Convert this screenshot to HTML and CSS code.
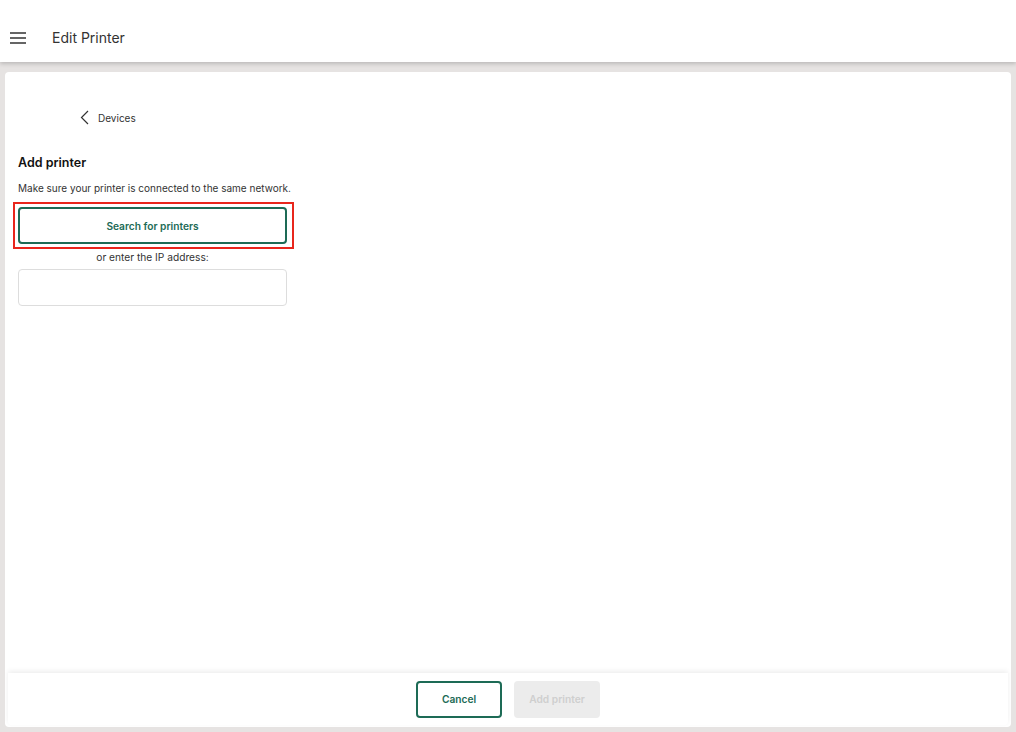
FILE: index.html
```html
<!DOCTYPE html>
<html lang="en">
<head>
  <meta charset="UTF-8">
  <meta name="viewport" content="width=device-width, initial-scale=1.0">
  <title>Edit Printer</title>
  <link rel="stylesheet" href="styles.css">
</head>
<body>

  <header class="topbar">
    <button class="menu-btn" aria-label="Menu">
      <svg width="16" height="12" viewBox="0 0 16 12">
        <path d="M0 1h16M0 6h16M0 11h16" stroke="#333" stroke-width="1.4" fill="none"/>
      </svg>
    </button>
    <h1 class="title">Edit Printer</h1>
  </header>

  <main class="card">
    <div class="content">
      <a class="back" href="#">
        <svg width="9" height="15" viewBox="0 0 9 15">
          <path d="M8 1L1.5 7.5L8 14" stroke="#333" stroke-width="1.2" fill="none"/>
        </svg>
        <span>Devices</span>
      </a>

      <section class="add-printer">
        <h2>Add printer</h2>
        <p class="hint">Make sure your printer is connected to the same network.</p>
        <div class="highlight">
          <button class="btn btn-outline btn-wide">Search for printers</button>
        </div>
        <p class="or">or enter the IP address:</p>
        <input class="ip-input" type="text">
      </section>
    </div>

    <footer class="actions">
      <button class="btn btn-outline">Cancel</button>
      <button class="btn btn-disabled" disabled>Add printer</button>
    </footer>
  </main>

</body>
</html>
```

FILE: styles.css
```css
* {
  box-sizing: border-box;
}
html, body {
  height: 100%;
}
body {
  margin: 0;
  font-family: Inter, "Noto Sans", Arial, sans-serif;
  background: #e6e3e2;
  color: #222;
  display: flex;
  flex-direction: column;
}
.topbar {
  height: 62px;
  background: #fff;
  display: flex;
  align-items: center;
  padding: 12px 10px 0 10px;
  box-shadow: 0 2px 4px rgba(0, 0, 0, 0.18);
  position: relative;
  z-index: 1;
  flex-shrink: 0;
}
.menu-btn {
  border: none;
  background: none;
  padding: 0;
  width: 16px;
  height: 12px;
  display: flex;
  margin-right: 26px;
  margin-top: 2px;
}
.title {
  margin: 0;
  font-size: 14px;
  font-weight: 400;
  color: #333;
}
.card {
  flex: 1;
  margin: 10px 5px 5px 5px;
  background: #fff;
  border-radius: 4px;
  display: flex;
  flex-direction: column;
  overflow: hidden;
}
.content {
  flex: 1;
  padding: 38px 13px 0 13px;
}
.back {
  display: flex;
  align-items: center;
  gap: 9px;
  margin-left: 62px;
  color: #333;
  text-decoration: none;
  font-size: 10px;
}
.add-printer {
  width: 269px;
  margin-top: 30px;
}
.add-printer h2 {
  margin: 0;
  font-size: 12.5px;
  font-weight: 600;
  color: #111;
}
.hint {
  margin: 12px 0 0 0;
  font-size: 10px;
  color: #333;
  white-space: nowrap;
}
.highlight {
  margin: 8px -7px 0 -5px;
  border: 2px solid #e8261c;
  padding: 3px 5px 3px 3px;
}
.btn {
  font-family: inherit;
  font-size: 10.2px;
  font-weight: 600;
  height: 37px;
  border-radius: 4px;
  padding: 0 12px;
}
.btn-outline {
  background: #fff;
  border: 2px solid #1d6b56;
  color: #1d6b56;
  width: 86px;
}
.btn-wide {
  width: 100%;
  display: block;
}
.or {
  margin: 2px 0 6px 0;
  text-align: center;
  font-size: 10.2px;
  color: #333;
}
.ip-input {
  display: block;
  width: 100%;
  height: 37px;
  border: 1px solid #ddd;
  border-radius: 4px;
}
.actions {
  margin: 0 3px 2px 3px;
  height: 52px;
  display: flex;
  justify-content: center;
  align-items: center;
  gap: 12px;
  box-shadow: 0 -2px 5px rgba(0, 0, 0, 0.07);
  border-radius: 0 0 4px 4px;
}
.btn-disabled {
  width: 86px;
  background: #ececec;
  border: none;
  color: #cfcfcf;
}
```
